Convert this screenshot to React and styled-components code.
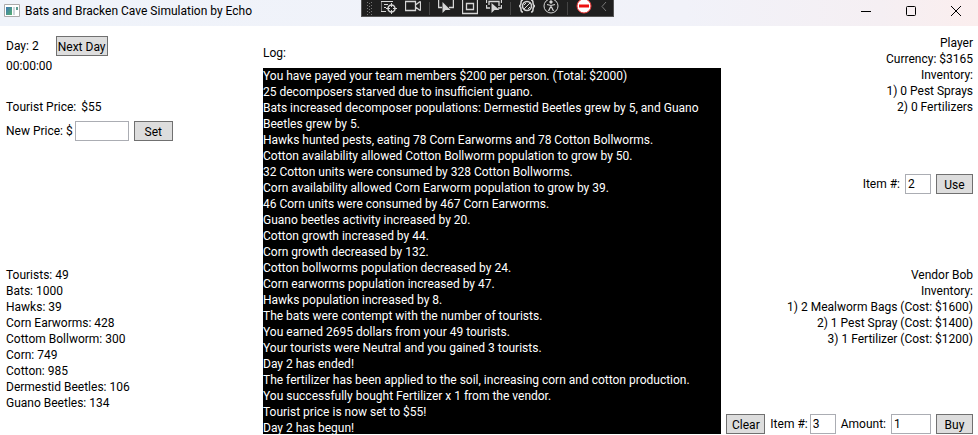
import React from "react";
import styled, { createGlobalStyle } from "styled-components";

const GlobalStyle = createGlobalStyle`
  *, *::before, *::after { box-sizing: border-box; }
  html, body, #root { height: 100%; }
  body { margin: 0; overflow: hidden; background: #fff; }
  body, button, input { font: 12px/16px Roboto, "Segoe UI", sans-serif; color: #000; }
  p, ul, ol, h1, h2 { margin: 0; padding: 0; font: inherit; list-style: none; }
`;

const Window = styled.div`
  height: 100%;
  display: flex;
  flex-direction: column;
  background: #fff;
`;

const TitleBar = styled.header`
  position: relative;
  flex: none;
  height: 26px;
  padding: 0 16px 4px 4px;
  display: flex;
  align-items: center;
  gap: 5px;
  background: linear-gradient(90deg, #eff3fa 0%, #f1f2f9 70%, #f5eff3 90%, #fbeeee 100%);
`;

const WindowControls = styled.div`
  margin-left: auto;
  display: flex;
  gap: 33px;
`;

const WindowButton = styled.button`
  width: 12px;
  height: 20px;
  padding: 0;
  border: 0;
  background: none;
  display: flex;
  align-items: center;
  justify-content: center;
  svg { flex: none; }
`;

const DebugBar = styled.div`
  position: absolute;
  top: 0;
  left: calc(50% - 128px);
  width: 253px;
  height: 17px;
  padding: 0 5px;
  display: flex;
  align-items: center;
  justify-content: space-between;
  background: #1f1f1f;
  border: 1px solid #555;
  border-top: 0;
  svg { display: block; flex: none; }
`;

const DebugButton = styled.button`
  padding: 0;
  border: 0;
  background: none;
`;

const Divider = styled.span`
  width: 1px;
  height: 13px;
  background: #444;
`;

const Content = styled.main`
  flex: 1;
  min-height: 0;
  display: grid;
  grid-template-columns: minmax(0, 263fr) minmax(0, 458fr) minmax(0, 257fr);
`;

const Side = styled.section`
  display: flex;
  flex-direction: column;
  padding: ${(p) => (p.$end ? "9px 5px 0" : "10px 6px 0")};
  align-items: ${(p) => (p.$end ? "flex-end" : "flex-start")};
  text-align: ${(p) => (p.$end ? "right" : "left")};
`;

const Row = styled.div`
  display: flex;
  align-items: center;
  white-space: nowrap;
  gap: ${(p) => p.$gap || 5}px;
  margin-top: ${(p) => p.$top || 0}px;
`;

const Lines = styled.ul`
  margin-top: ${(p) => p.$top || 0}px;
  white-space: nowrap;
`;

const Button = styled.button`
  height: 20px;
  width: ${(p) => p.$width}px;
  padding: 2px 0 0;
  line-height: 16px;
  white-space: nowrap;
  border: 1px solid #707070;
  background: #ddd;
`;

const Field = styled.input`
  height: 20px;
  width: ${(p) => p.$width}px;
  padding: 0 2px;
  border: 1px solid #abadb3;
  border-radius: 0;
  background: #fff;
  outline: none;
`;

const LogPanel = styled.section`
  min-height: 0;
  display: flex;
  flex-direction: column;
  padding: 19px 0 1px;
`;

const LogOutput = styled.div`
  flex: 1;
  min-height: 0;
  margin-top: 7px;
  overflow: hidden;
  background: #000;
  color: #fff;
`;

const log = [
  "You have payed your team members $200 per person. (Total: $2000)",
  "25 decomposers starved due to insufficient guano.",
  "Bats increased decomposer populations: Dermestid Beetles grew by 5, and Guano Beetles grew by 5.",
  "Hawks hunted pests, eating 78 Corn Earworms and 78 Cotton Bollworms.",
  "Cotton availability allowed Cotton Bollworm population to grow by 50.",
  "32 Cotton units were consumed by 328 Cotton Bollworms.",
  "Corn availability allowed Corn Earworm population to grow by 39.",
  "46 Corn units were consumed by 467 Corn Earworms.",
  "Guano beetles activity increased by 20.",
  "Cotton growth increased by 44.",
  "Corn growth decreased by 132.",
  "Cotton bollworms population decreased by 24.",
  "Corn earworms population increased by 47.",
  "Hawks population increased by 8.",
  "The bats were contempt with the number of tourists.",
  "You earned 2695 dollars from your 49 tourists.",
  "Your tourists were Neutral and you gained 3 tourists.",
  "Day 2 has ended!",
  "The fertilizer has been applied to the soil, increasing corn and cotton production.",
  "You successfully bought Fertilizer x 1 from the vendor.",
  "Tourist price is now set to $55!",
  "Day 2 has begun!",
];

const stats = [
  "Tourists: 49", "Bats: 1000", "Hawks: 39", "Corn Earworms: 428",
  "Cottom Bollworm: 300", "Corn: 749", "Cotton: 985",
  "Dermestid Beetles: 106", "Guano Beetles: 134",
];

const player = ["Player", "Currency: $3165", "Inventory:", "1) 0 Pest Sprays", "2) 0 Fertilizers"];

const vendor = [
  "Vendor Bob", "Inventory:", "1) 2 Mealworm Bags (Cost: $1600)",
  "2) 1 Pest Spray (Cost: $1400)", "3) 1 Fertilizer (Cost: $1200)",
];

const TextList = ({ items, top }) => (
  <Lines $top={top}>{items.map((t) => <li key={t}>{t}</li>)}</Lines>
);

const Icon = ({ w = 16, h = 16, children }) => (
  <svg width={w} height={h} viewBox={`0 0 ${w} ${h}`} fill="none" stroke="#d6d6d6" aria-hidden="true">
    {children}
  </svg>
);

const DebugToolbar = () => (
  <DebugBar>
    <Icon w={6} h={14}>
      <path d="M.5 1v13M4.5 1v13" stroke="#777" strokeDasharray="1 2" />
      <path d="M2.5 2v12" stroke="#777" strokeDasharray="1 2" />
    </Icon>
    <DebugButton aria-label="Live visual tree"><Icon>
      <path d="M0 1.500h12M0 1.500v10h5M3 4.500h4M3 7.500h2" />
      <circle cx="10.5" cy="8.500" r="3.500" strokeWidth="1.500" />
      <path d="M10.500 3v4M10.500 10v4M5 8.500h4M12 8.500h4" />
    </Icon></DebugButton>
    <DebugButton aria-label="Record"><Icon>
      <path d="M.5 1.500h10v9H.5zM10.500 5l4-3h1v8h-1l-4-3" strokeWidth="1.300" />
    </Icon></DebugButton>
    <Divider />
    <DebugButton aria-label="Select element"><Icon>
      <path d="M.5 0v7.500H4M15.500 0v7.500H11" strokeWidth="1.500" /><path d="M4.500 2v11l3-3h5z" fill="#d6d6d6" stroke="none" />
    </Icon></DebugButton>
    <DebugButton aria-label="Layout adorners"><Icon>
      <path d="M.5 0v13.500h15V0M4.500 3.500h7v6h-7z" strokeWidth="1.300" />
    </Icon></DebugButton>
    <DebugButton aria-label="Track focused element"><Icon>
      <path d="M.5 0v3M.5 5v3H4M15.500 0v3M15.500 5v3H12M3 5V1.500h10V6" strokeWidth="1.300" /><path d="M5.500 3v10l3-3h5z" fill="#d6d6d6" stroke="none" />
    </Icon></DebugButton>
    <Divider />
    <DebugButton aria-label="Binding failures"><Icon>
      <circle cx="8" cy="6" r="4.500" strokeWidth="1.500" />
      <path d="M4 0C0 0 4 5 0 6c4 1 0 6 4 6M12 0c4 0 0 5 4 6-4 1 0 6-4 6" strokeWidth="1.500" />
      <path d="M5 9l6-6M5 5l2-2M9 9l2-2" />
    </Icon></DebugButton>
    <DebugButton aria-label="Accessibility checker"><Icon>
      <circle cx="8" cy="6" r="7" /><circle cx="8" cy="2" r="1.200" fill="#d6d6d6" /><path d="M4 4.500l4 1 4-1M8 5v3M7.500 7l-2 4M8.500 7l2 4" strokeWidth="1.200" />
    </Icon></DebugButton>
    <Divider />
    <DebugButton aria-label="Hot reload"><Icon>
      <circle cx="8" cy="6" r="7" fill="#fff" stroke="#e33" /><path d="M3 6h10" stroke="#e11" strokeWidth="3" />
    </Icon></DebugButton>
    <DebugButton aria-label="Collapse"><Icon w={8}><path d="M6 2L2 6.500l4 4.500" stroke="#777" /></Icon></DebugButton>
  </DebugBar>
);

export default function App() {
  return (
    <Window>
      <GlobalStyle />
      <TitleBar>
        <svg width="16" height="14" viewBox="0 0 16 14" aria-hidden="true">
          <defs><linearGradient id="app" x2="1" y2="1"><stop stopColor="#3c78b4" /><stop offset="1" stopColor="#56b070" /></linearGradient></defs>
          <path d="M.5.5h15v12H.5z" fill="#fff" stroke="#aaa" />
          <path d="M2 3h6v8H2z" fill="url(#app)" /><path d="M9 3h2v8H9z" fill="#ccd6da" /><path d="M12 3h2v3h-2z" fill="#5b9b91" />
        </svg>
        <h1>Bats and Bracken Cave Simulation by Echo</h1>
        <DebugToolbar />
        <WindowControls>
          <WindowButton aria-label="Minimize"><svg width="10" height="10"><path d="M0 5.500h10" stroke="#000" /></svg></WindowButton>
          <WindowButton aria-label="Maximize"><svg width="10" height="10"><rect x=".5" y=".5" width="9" height="9" rx="1" fill="none" stroke="#000" /></svg></WindowButton>
          <WindowButton aria-label="Close"><svg width="10" height="10"><path d="M0 0l10 10M10 0L0 10" stroke="#000" /></svg></WindowButton>
        </WindowControls>
      </TitleBar>
      <Content>
        <Side>
          <Row $gap={17}><span>Day: 2</span><Button $width={52}>Next Day</Button></Row>
          <Row $top={2}>00:00:00</Row>
          <Row $top={25}><span>Tourist Price:</span><span>$55</span></Row>
          <Row $top={6}>
            <Row as="label" $gap={2}>New Price: $<Field $width={54} defaultValue="" /></Row>
            <Button $width={39}>Set</Button>
          </Row>
          <TextList items={stats} top={126} />
        </Side>
        <LogPanel>
          <h2>Log:</h2>
          <LogOutput role="log">{log.map((t) => <p key={t}>{t}</p>)}</LogOutput>
        </LogPanel>
        <Side $end>
          <TextList items={player} />
          <Row $top={59}>
            <Row as="label">Item #:<Field $width={26} defaultValue="2" /></Row>
            <Button $width={37}>Use</Button>
          </Row>
          <TextList items={vendor} top={73} />
          <Row $top={67}>
            <Button $width={39}>Clear</Button>
            <Row as="label" $gap={2}>Item #:<Field $width={26} defaultValue="3" /></Row>
            <Row as="label">Amount:<Field $width={40} defaultValue="1" /></Row>
            <Button $width={37}>Buy</Button>
          </Row>
        </Side>
      </Content>
    </Window>
  );
}
